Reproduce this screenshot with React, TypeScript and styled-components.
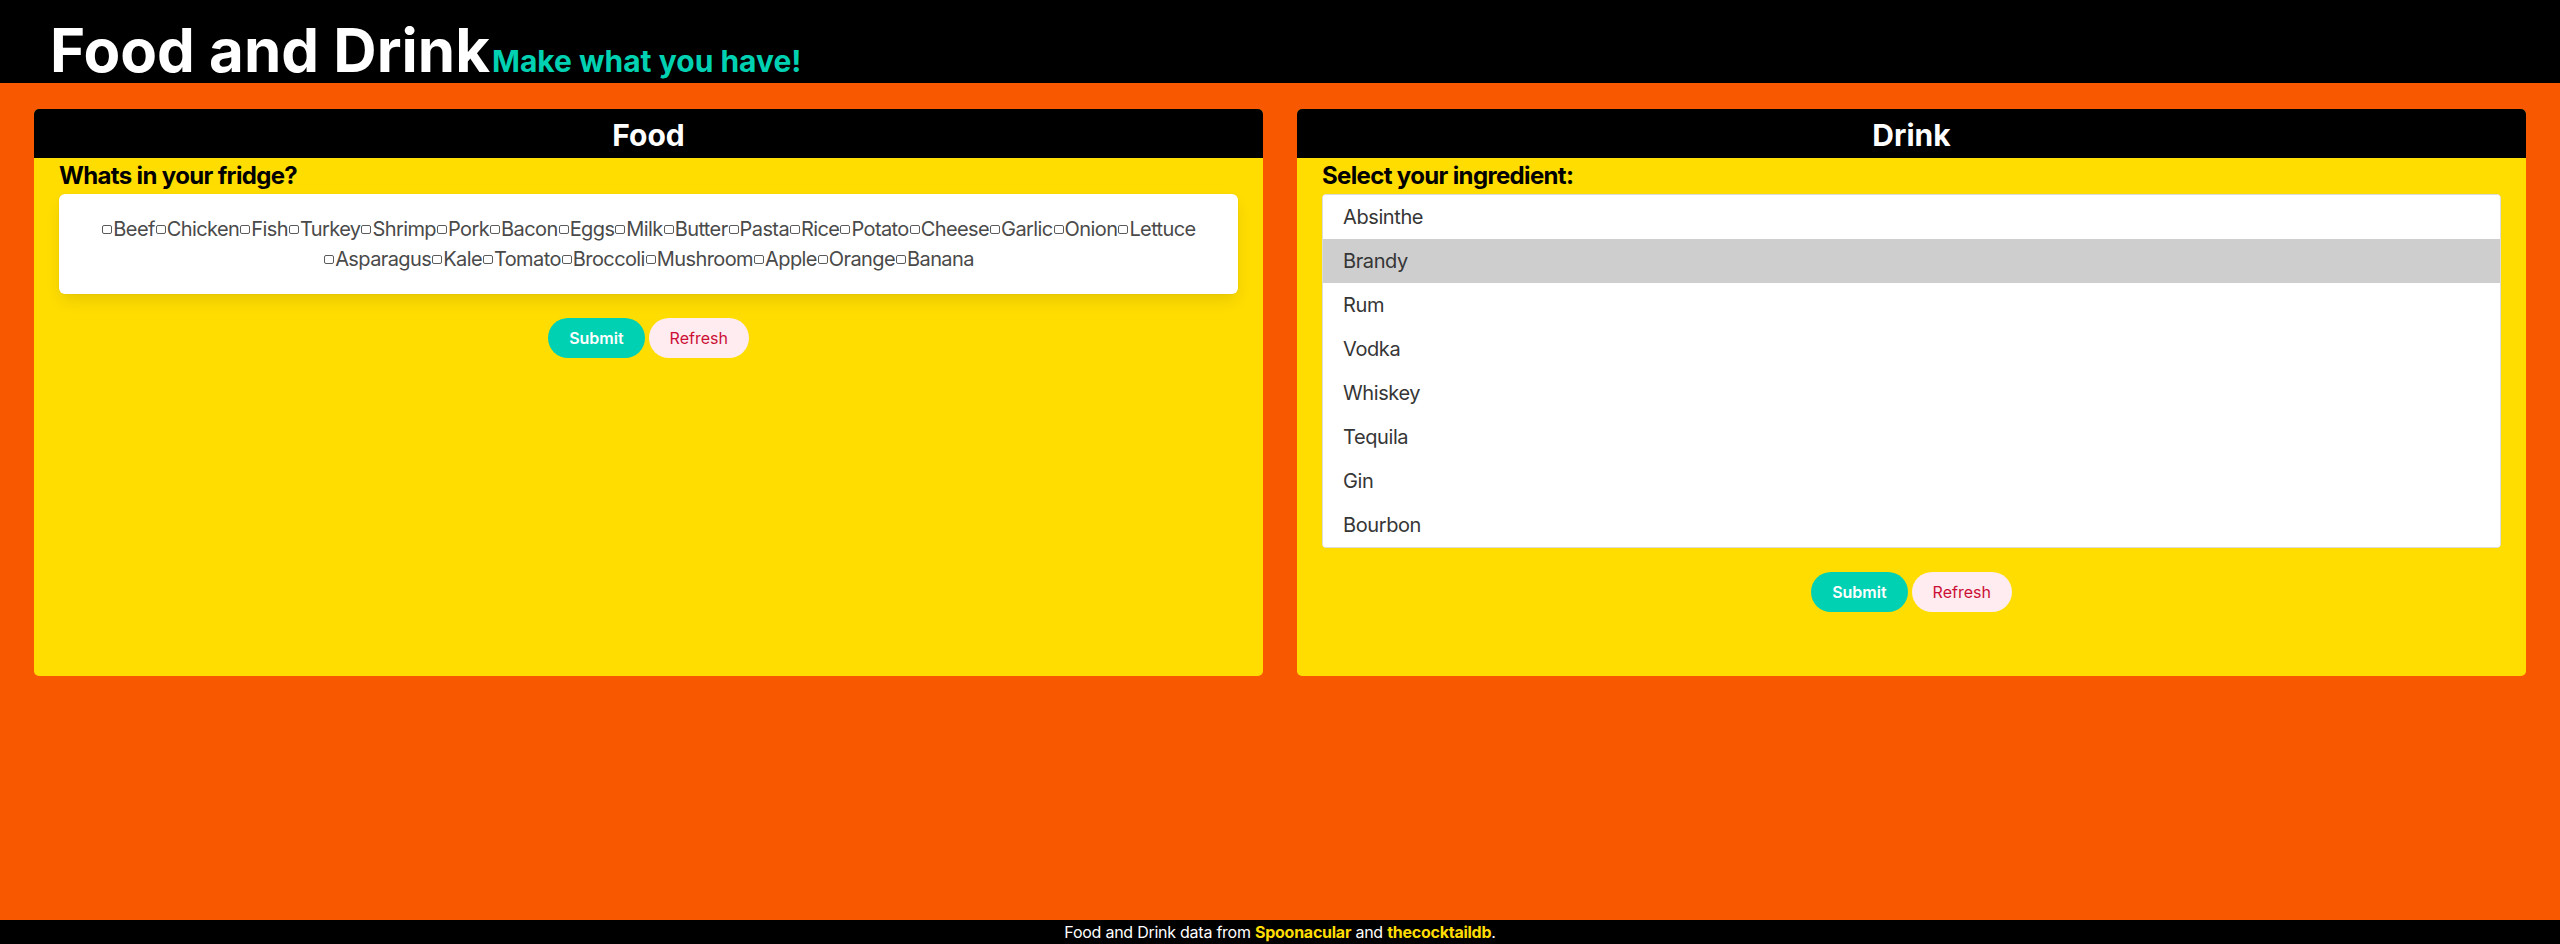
import React from "react";
import styled, { createGlobalStyle } from "styled-components";

const GlobalStyle = createGlobalStyle`
  html, body {
    margin: 0;
    padding: 0;
    background: #f85800;
  }
  body {
    font-family: Inter, "Noto Sans", "Liberation Sans", sans-serif;
    color: #4a4a4a;
  }
  * { box-sizing: border-box; }
`;

const Page = styled.div`
  min-height: 100vh;
  display: flex;
  flex-direction: column;
  background: #f85800;
`;

const Header = styled.header`
  height: 83px;
  background: #000;
  display: flex;
  align-items: baseline;
  padding: 20px 50px 0;
`;

const Title = styled.h1`
  margin: 0;
  font-size: 60px;
  line-height: 60px;
  font-weight: 700;
  color: #fff;
`;

const Tagline = styled.span`
  font-size: 30px;
  font-weight: 700;
  color: #00d1b2;
  margin-left: 2px;
`;

const Main = styled.main`
  flex: 1;
  display: grid;
  grid-template-columns: 1fr 1fr;
  column-gap: 34px;
  align-items: start;
  padding: 26px 34px;
`;

const Panel = styled.section`
  background: #ffdd00;
  border-radius: 5px;
  overflow: hidden;
  height: 567px;
  display: flex;
  flex-direction: column;
`;

const PanelHeader = styled.h2`
  margin: 0;
  height: 49px;
  padding-top: 4px;
  line-height: 45px;
  background: #000;
  color: #fff;
  text-align: center;
  font-size: 30px;
  font-weight: 700;
`;

const PanelBody = styled.div`
  padding: 0 25px 64px;
  display: flex;
  flex-direction: column;
`;

const Prompt = styled.h3`
  margin: 0;
  font-size: 24px;
  line-height: 36px;
  font-weight: 700;
  color: #000;
  letter-spacing: -0.65px;
`;

const Box = styled.div`
  background: #fff;
  border-radius: 6px;
  padding: 20px;
  box-shadow: 0 8px 16px -2px rgba(10, 10, 10, 0.1), 0 0 0 1px rgba(10, 10, 10, 0.02);
  text-align: center;
  font-size: 20px;
  line-height: 30px;
  color: #4a4a4a;
  letter-spacing: -0.6px;
`;

const Choice = styled.label`
  display: inline-block;
  white-space: nowrap;
`;

const Tick = styled.span`
  display: inline-block;
  width: 10px;
  height: 9px;
  margin: 0 1px 0 1px;
  border: 1px solid #5a5a5a;
  border-radius: 2px;
  vertical-align: 2px;
`;

const List = styled.div`
  background: #fff;
  border: 1px solid #dbdbdb;
  border-radius: 4px;
  overflow: hidden;
`;

const Option = styled.div<{ $selected?: boolean }>`
  padding: 10px 20px;
  font-size: 20px;
  line-height: 24px;
  color: #363636;
  letter-spacing: -0.4px;
  background: ${(p) => (p.$selected ? "#cecece" : "#fff")};
`;

const Buttons = styled.div`
  margin-top: 24px;
  display: flex;
  justify-content: center;
  gap: 4px;
`;

const Button = styled.button<{ $variant: "primary" | "danger" }>`
  height: 40px;
  padding: 0 20px;
  border: 1px solid transparent;
  border-radius: 9999px;
  font-family: inherit;
  font-size: 16px;
  font-weight: ${(p) => (p.$variant === "primary" ? 600 : 400)};
  background: ${(p) => (p.$variant === "primary" ? "#00d1b2" : "#feecf0")};
  color: ${(p) => (p.$variant === "primary" ? "#fff" : "#cc0f35")};
  cursor: pointer;
`;

const Footer = styled.footer`
  height: 24px;
  background: #000;
  color: #fff;
  text-align: center;
  font-size: 16px;
  line-height: 24px;
  letter-spacing: -0.25px;
`;

const FooterLink = styled.a`
  color: #ffdd00;
  font-weight: 700;
  text-decoration: none;
`;

const foods = [
  "Beef", "Chicken", "Fish", "Turkey", "Shrimp", "Pork", "Bacon", "Eggs", "Milk",
  "Butter", "Pasta", "Rice", "Potato", "Cheese", "Garlic", "Onion", "Lettuce",
  "Asparagus", "Kale", "Tomato", "Broccoli", "Mushroom", "Apple", "Orange", "Banana",
];

const drinks = ["Absinthe", "Brandy", "Rum", "Vodka", "Whiskey", "Tequila", "Gin", "Bourbon"];

export default function App() {
  return (
    <Page>
      <GlobalStyle />
      <Header>
        <Title>Food and Drink</Title>
        <Tagline>Make what you have!</Tagline>
      </Header>
      <Main>
        <Panel>
          <PanelHeader>Food</PanelHeader>
          <PanelBody>
            <Prompt>Whats in your fridge?</Prompt>
            <Box>
              {foods.map((f) => (
                <Choice key={f}>
                  <Tick />
                  {f}
                </Choice>
              ))}
            </Box>
            <Buttons>
              <Button $variant="primary">Submit</Button>
              <Button $variant="danger">Refresh</Button>
            </Buttons>
          </PanelBody>
        </Panel>
        <Panel>
          <PanelHeader>Drink</PanelHeader>
          <PanelBody>
            <Prompt>Select your ingredient:</Prompt>
            <List>
              {drinks.map((d) => (
                <Option key={d} $selected={d === "Brandy"}>
                  {d}
                </Option>
              ))}
            </List>
            <Buttons>
              <Button $variant="primary">Submit</Button>
              <Button $variant="danger">Refresh</Button>
            </Buttons>
          </PanelBody>
        </Panel>
      </Main>
      <Footer>
        Food and Drink data from <FooterLink href="#">Spoonacular</FooterLink> and{" "}
        <FooterLink href="#">thecocktaildb</FooterLink>.
      </Footer>
    </Page>
  );
}
